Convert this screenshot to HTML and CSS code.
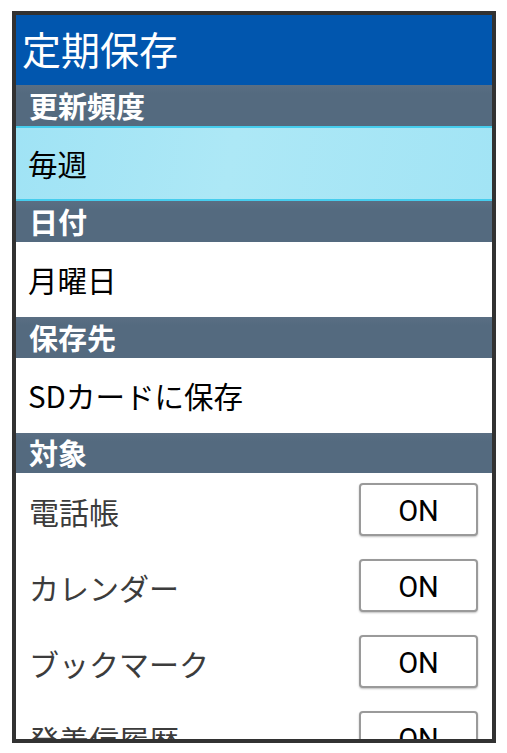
FILE: index.html
```html
<!DOCTYPE html>
<html lang="ja">
<head>
    <meta charset="UTF-8">
    <meta name="viewport" content="width=device-width, initial-scale=1.0">
    <title>定期保存</title>
    <link rel="stylesheet" href="styles.css">
</head>
<body>
    <div class="screen">
        <!-- Title bar -->
        <div class="title-bar">定期保存</div>

        <div class="section-head">更新頻度</div>
        <div class="item item-selected">毎週</div>

        <div class="section-head">日付</div>
        <div class="item">月曜日</div>

        <div class="section-head">保存先</div>
        <div class="item">SDカードに保存</div>

        <div class="section-head section-last">対象</div>
        <div class="toggle-row">
            <span class="toggle-label">電話帳</span>
            <button class="toggle-btn">ON</button>
        </div>
        <div class="toggle-row">
            <span class="toggle-label">カレンダー</span>
            <button class="toggle-btn">ON</button>
        </div>
        <div class="toggle-row">
            <span class="toggle-label">ブックマーク</span>
            <button class="toggle-btn">ON</button>
        </div>
        <div class="toggle-row">
            <span class="toggle-label">発着信履歴</span>
            <button class="toggle-btn">ON</button>
        </div>
    </div>
</body>
</html>
```

FILE: styles.css
```css
* {
    margin: 0;
    padding: 0;
    box-sizing: border-box;
}

body {
    font-family: "Noto Sans CJK JP", "Noto Sans", sans-serif;
    background: #fff;
}

.screen {
    width: 484px;
    height: 732px;
    margin: 11px 0 0 12px;
    border: 4px solid #323232;
    overflow: hidden;
    background: #fff;
}

.title-bar {
    height: 70px;
    background: #0156ae;
    color: #fff;
    font-size: 39px;
    line-height: 66px;
    padding-left: 6px;
}

.section-head {
    height: 41px;
    background: linear-gradient(#5a6e83, #546a7f 20%);
    color: #fff;
    font-size: 29px;
    font-weight: bold;
    line-height: 40px;
    padding-left: 13px;
}

.section-last {
    height: 40px;
    line-height: 39px;
}

.item {
    height: 75px;
    line-height: 75px;
    font-size: 29.5px;
    color: #000;
    padding-left: 12px;
}

.item-selected {
    background: linear-gradient(100deg, #a0e3f5, #ade8f6 45%, #a2e4f5);
    border-top: 2px solid #46cdee;
    border-bottom: 2px solid #46cdee;
    line-height: 71px;
}

.toggle-row {
    height: 76px;
    display: flex;
    align-items: flex-start;
    justify-content: space-between;
    padding: 10px 14px 0 13px;
}

.toggle-label {
    font-size: 30px;
    color: #3c3c3c;
    line-height: 56px;
}

.toggle-btn {
    width: 119px;
    height: 53px;
    padding-top: 3px;
    background: #fff;
    border: 2px solid #9a9a9a;
    border-radius: 4px;
    box-shadow: 0 1px 2px rgba(0, 0, 0, 0.25);
    font-family: Roboto, "Noto Sans", sans-serif;
    font-size: 29px;
    color: #000;
}
```
